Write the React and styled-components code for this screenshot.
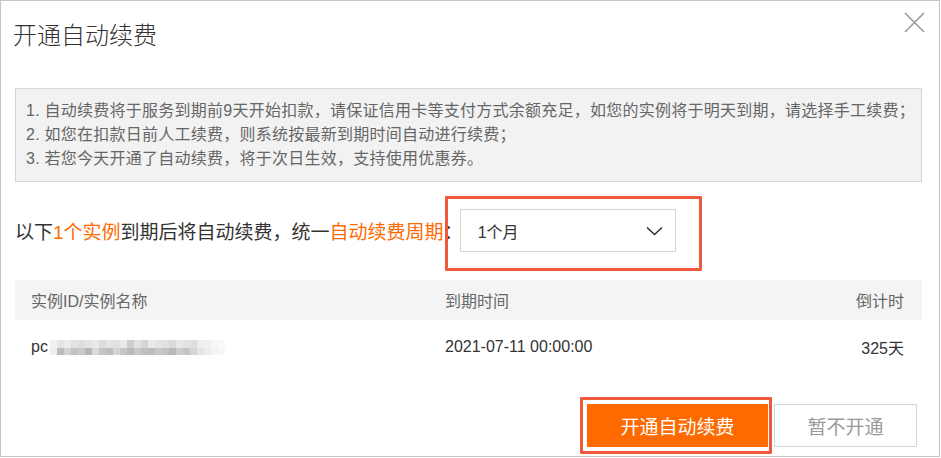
import styled, { createGlobalStyle } from 'styled-components';

const GlobalStyle = createGlobalStyle`
  html, body {
    margin: 0;
    padding: 0;
    background: #fff;
  }
  body {
    font-family: "Liberation Sans", "Noto Sans CJK SC", sans-serif;
  }
  * {
    box-sizing: border-box;
  }
`;

const notes = [
  '1. 自动续费将于服务到期前9天开始扣款，请保证信用卡等支付方式余额充足，如您的实例将于明天到期，请选择手工续费；',
  '2. 如您在扣款日前人工续费，则系统按最新到期时间自动进行续费；',
  '3. 若您今天开通了自动续费，将于次日生效，支持使用优惠券。',
];

const mosaicTop = [
  '#f2f2f2', '#e6e6e6', '#ececec', '#e2e2e2', '#dedede', '#e4e4e4', '#e8e8e8', '#dcdcdc',
  '#e6e6e6', '#e0e0e0', '#e8e8e8', '#cdcdcd', '#e2e2e2', '#d6d6d6', '#eaeaea', '#e4e4e4',
  '#e0e0e0', '#dadada', '#e8e8e8', '#e2e2e2', '#dedede', '#eeeeee', '#f0f0f0', '#f6f6f6',
  '#fafafa',
];

const mosaicBottom = [
  '#eeeeee', '#bcbcbc', '#d2d2d2', '#c2c2c2', '#cacaca', '#b6b6b6', '#dadada', '#c4c4c4',
  '#bebebe', '#d4d4d4', '#c6c6c6', '#bababa', '#c8c8c8', '#c0c0c0', '#bcbcbc', '#c8c8c8',
  '#c2c2c2', '#b8b8b8', '#cccccc', '#c4c4c4', '#d6d6d6', '#e4e4e4', '#eeeeee', '#f4f4f4',
  '#f8f8f8',
];

const Mosaic = () => (
  <svg width="175" height="15" viewBox="0 0 175 15" aria-hidden="true">
    {mosaicTop.map((c, i) => (
      <rect key={`t${i}`} x={i * 7} y="0" width="7" height="8" fill={c} />
    ))}
    {mosaicBottom.map((c, i) => (
      <rect key={`b${i}`} x={i * 7} y="8" width="7" height="7" fill={c} />
    ))}
  </svg>
);

const App = () => {
  return (
    <>
      <GlobalStyle />
      <Dialog>
        <Header>
          <Title>开通自动续费</Title>
        </Header>
        <CloseButton aria-label="close">
          <svg width="21" height="21" viewBox="0 0 21 21">
            <path d="M1 1 L20 20 M20 1 L1 20" stroke="#9a9a9a" strokeWidth="1.6" fill="none" />
          </svg>
        </CloseButton>
        <Body>
          <Notice>
            {notes.map(n => (
              <NoticeLine key={n}>{n}</NoticeLine>
            ))}
          </Notice>

          <SettingRow>
            <Sentence>
              以下<Em>1个实例</Em>到期后将自动续费，统一<Em>自动续费周期</Em>：
            </Sentence>
            <SelectWrap>
              <Select>
                <span>1个月</span>
                <svg width="17" height="10" viewBox="0 0 17 10">
                  <path d="M1 1.5 L8.5 8.5 L16 1.5" stroke="#333" strokeWidth="1.6" fill="none" />
                </svg>
              </Select>
            </SelectWrap>
          </SettingRow>

          <Table>
            <HeadRow>
              <span>实例ID/实例名称</span>
              <span>到期时间</span>
              <RightCell>倒计时</RightCell>
            </HeadRow>
            <BodyRow>
              <NameCell>
                pc
                <Mosaic />
              </NameCell>
              <span>2021-07-11 00:00:00</span>
              <RightCell>325天</RightCell>
            </BodyRow>
          </Table>

          <Footer>
            <PrimaryButton>开通自动续费</PrimaryButton>
            <SecondaryButton>暂不开通</SecondaryButton>
          </Footer>
        </Body>
      </Dialog>
    </>
  );
};

export default App;

const Dialog = styled.div`
  position: relative;
  width: 940px;
  height: 457px;
  border: 1px solid #c6c6c6;
  background: #fff;
`;

const Header = styled.div`
  padding: 19px 14px 0 12px;
`;

const Title = styled.h1`
  margin: 0;
  font-size: 24px;
  line-height: 32px;
  font-weight: 300;
  color: #333;
`;

const CloseButton = styled.button`
  position: absolute;
  top: 11px;
  right: 14px;
  padding: 0;
  border: none;
  background: none;
  line-height: 0;
  cursor: pointer;
`;

const Body = styled.div`
  padding: 36px 17px 0 14px;
`;

const Notice = styled.div`
  border: 1px solid #d6d6d6;
  background: #f2f2f2;
  padding: 10px;
  font-size: 16px;
  line-height: 24px;
  letter-spacing: 0.25px;
  color: #666;
`;

const NoticeLine = styled.div`
  white-space: nowrap;
`;

const SettingRow = styled.div`
  display: flex;
  align-items: center;
  margin-top: 27px;
`;

const Sentence = styled.div`
  font-size: 19px;
  color: #333;
  white-space: nowrap;
`;

const Em = styled.span`
  color: #ff6a00;
`;

const SelectWrap = styled.div`
  position: relative;
  margin-left: -3px;

  &::before {
    content: '';
    position: absolute;
    top: -13px;
    left: -15px;
    right: -26px;
    bottom: -19px;
    border: 3px solid #ee5a3b;
    border-radius: 1px;
    pointer-events: none;
  }
`;

const Select = styled.div`
  display: flex;
  align-items: center;
  justify-content: space-between;
  width: 216px;
  height: 43px;
  padding: 0 12px 0 17px;
  border: 1px solid #d3d3d3;
  background: #fff;
  font-size: 16px;
  color: #333;
`;

const Table = styled.div`
  margin-top: 28px;
`;

const Row = styled.div`
  display: grid;
  grid-template-columns: 414px 1fr auto;
  align-items: center;
  padding: 0 18px 0 16px;
`;

const HeadRow = styled(Row)`
  height: 40px;
  background: #f4f4f4;
  font-size: 16px;
  color: #666;
`;

const BodyRow = styled(Row)`
  height: 54px;
  font-size: 16px;
  color: #333;
`;

const RightCell = styled.span`
  text-align: right;
`;

const NameCell = styled.span`
  display: flex;
  align-items: center;
  gap: 2px;

  svg {
    margin-top: 1px;
  }
`;

const Footer = styled.div`
  display: flex;
  justify-content: flex-end;
  align-items: center;
  gap: 6px;
  margin-top: 30px;
  padding-right: 5px;
`;

const BaseButton = styled.button`
  height: 43px;
  padding: 0;
  font-family: inherit;
  font-size: 19px;
  cursor: pointer;
`;

const PrimaryButton = styled(BaseButton)`
  position: relative;
  width: 181px;
  border: none;
  background: #ff6a00;
  color: #fff;

  &::before {
    content: '';
    position: absolute;
    top: -7px;
    left: -7px;
    right: -4px;
    bottom: -7px;
    border: 3px solid #ee5a3b;
    border-radius: 1px;
    pointer-events: none;
  }
`;

const SecondaryButton = styled(BaseButton)`
  width: 143px;
  border: 1px solid #d6d6d6;
  background: #fff;
  color: #999;
`;
